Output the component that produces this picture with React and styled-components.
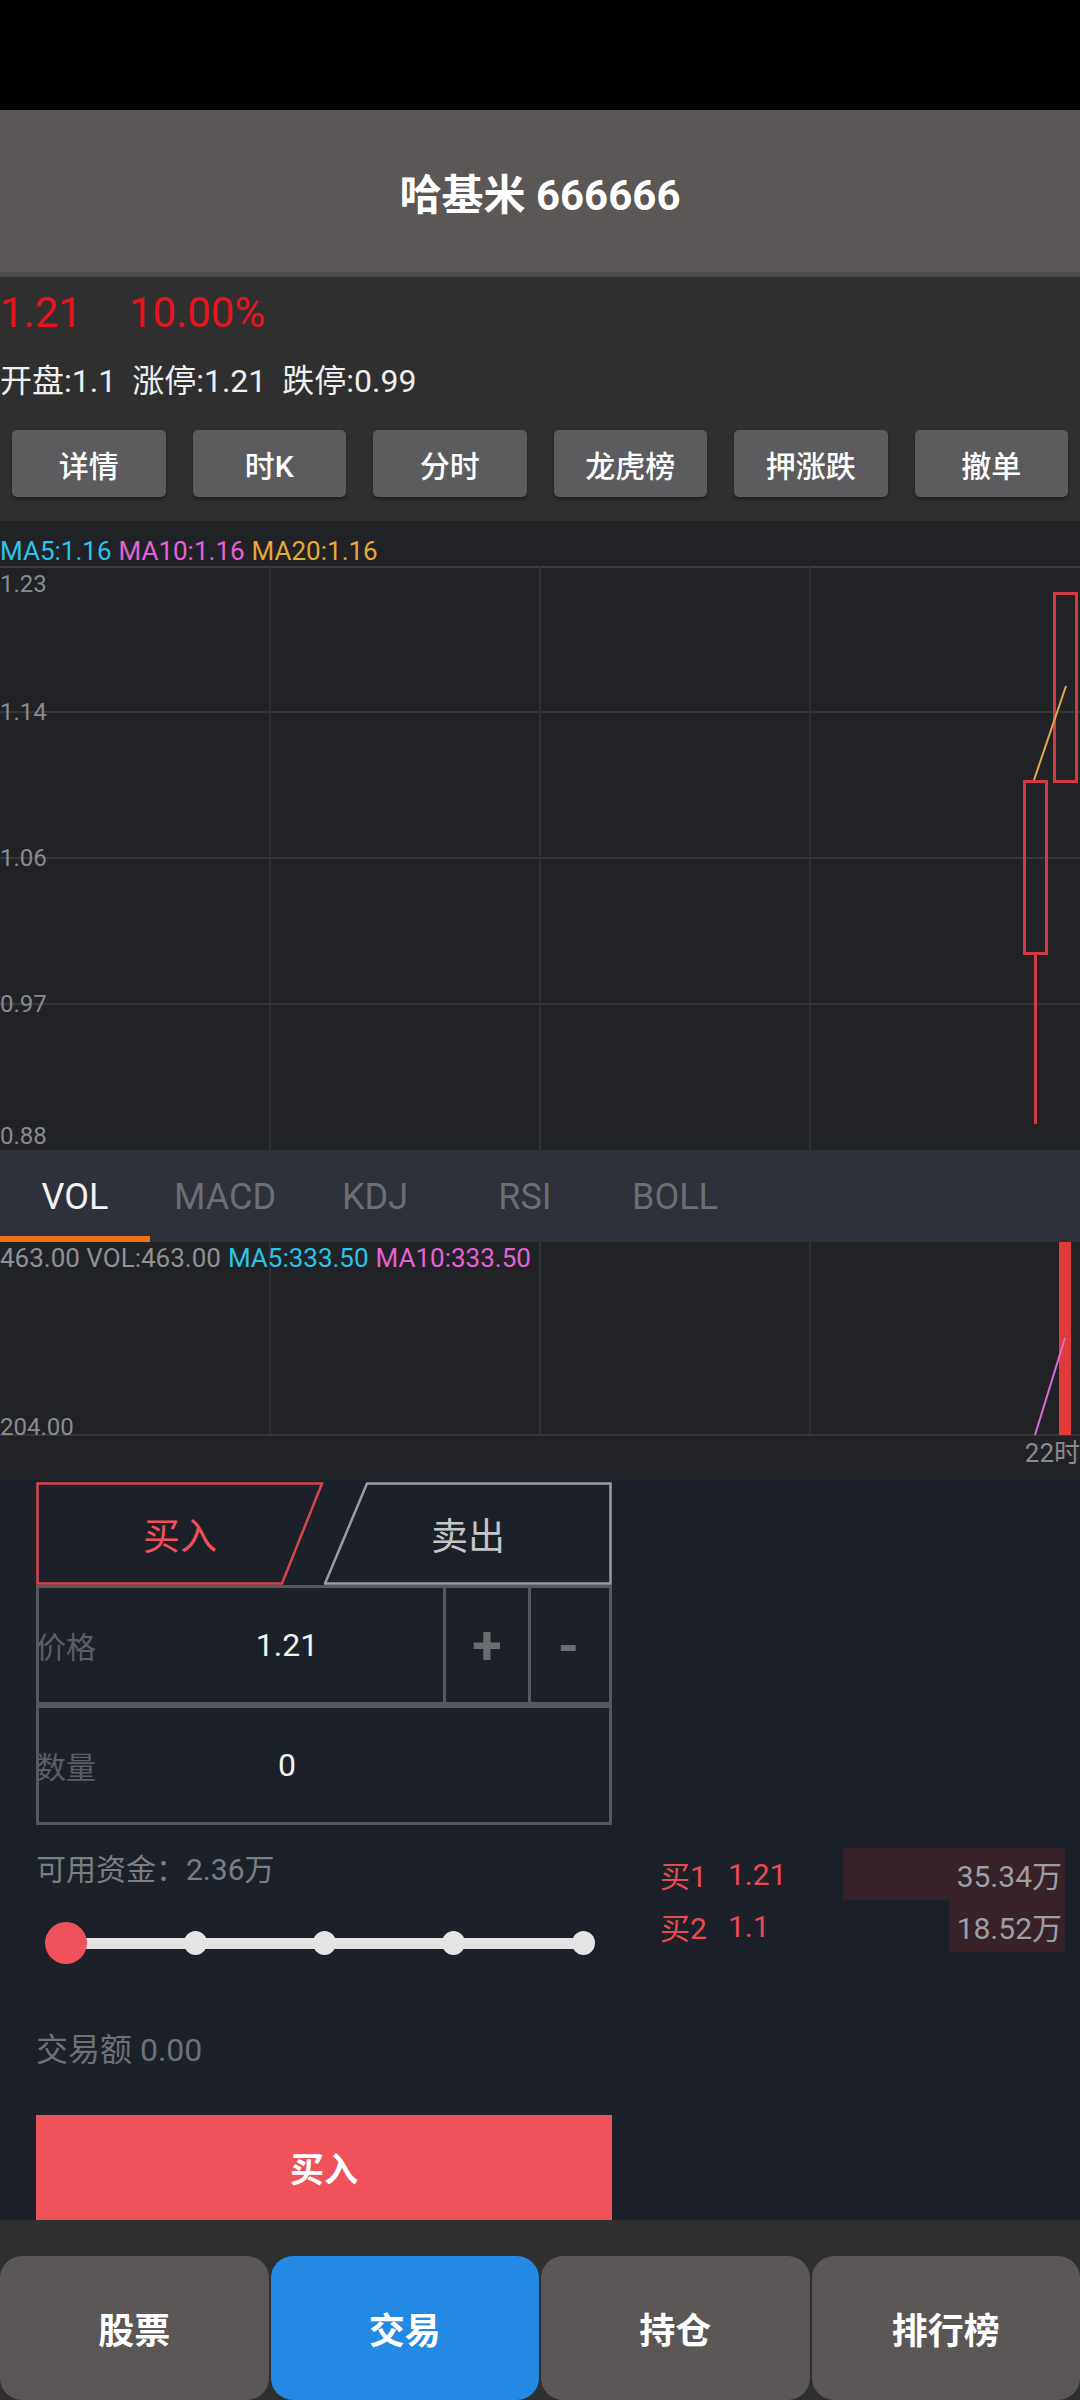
import React from "react"
import styled, { createGlobalStyle } from "styled-components"

const actions = ["详情", "时K", "分时", "龙虎榜", "押涨跌", "撤单"]
const indicators = ["VOL", "MACD", "KDJ", "RSI", "BOLL"]
const priceTicks = [
  { label: "1.23", top: 4 },
  { label: "1.14", top: 132 },
  { label: "1.06", top: 278 },
  { label: "0.97", top: 424 },
  { label: "0.88", top: 556 },
]
const book = [
  { side: "买1", price: "1.21", amount: 35.34 },
  { side: "买2", price: "1.1", amount: 18.52 },
]
const stops = [0, 25, 50, 75, 100]
const navs = ["股票", "交易", "持仓", "排行榜"]

class App extends React.Component {
  render() {
    const maxAmount = Math.max(...book.map(b => b.amount))
    return (
      <Page>
        <GlobalStyle />
        <StatusBar />
        <Header>哈基米 666666</Header>

        <InfoSection>
          <PriceLine>
            <span>1.21</span>
            <span>10.00%</span>
          </PriceLine>
          <StatsLine>
            <Stat>开盘:1.1</Stat>
            <Stat>涨停:1.21</Stat>
            <Stat>跌停:0.99</Stat>
          </StatsLine>
          <ActionRow>
            {actions.map(a => (
              <ActionButton key={a}>{a}</ActionButton>
            ))}
          </ActionRow>
        </InfoSection>

        <ChartSection>
          <Legend>
            <LegendItem $color="#2bc3e8">MA5:1.16</LegendItem>
            <LegendItem $color="#e462d6">MA10:1.16</LegendItem>
            <LegendItem $color="#e6a93a">MA20:1.16</LegendItem>
          </Legend>
          <Plot $height={584}>
            <PlotSvg width="1080" height="584" viewBox="0 0 1080 584">
              <line x1="0" x2="1080" y1="1" y2="1" stroke="#3b3d41" strokeWidth="2" />
              {[146, 292, 438].map(y => (
                <line key={y} x1="0" x2="1080" y1={y} y2={y} stroke="#34363a" strokeWidth="2" />
              ))}
              {[270, 540, 810].map(x => (
                <line key={x} x1={x} x2={x} y1="0" y2="584" stroke="#2f3135" strokeWidth="2" />
              ))}
              <rect x="1054.5" y="27.5" width="22" height="188" fill="none" stroke="#d23a43" strokeWidth="3" />
              <rect x="1024.5" y="215.5" width="22" height="172" fill="none" stroke="#d23a43" strokeWidth="3" />
              <line x1="1035.5" x2="1035.5" y1="388" y2="558" stroke="#d23a43" strokeWidth="3" />
              <line x1="1034" y1="214" x2="1066" y2="120" stroke="#e2a94c" strokeWidth="2" />
            </PlotSvg>
            {priceTicks.map(t => (
              <AxisLabel key={t.label} $top={t.top}>
                {t.label}
              </AxisLabel>
            ))}
          </Plot>

          <IndicatorTabs>
            {indicators.map((name, i) => (
              <IndicatorTab key={name} $active={i === 0}>
                {name}
              </IndicatorTab>
            ))}
          </IndicatorTabs>

          <Plot $height={194}>
            <PlotSvg width="1080" height="194" viewBox="0 0 1080 194">
              {[270, 540, 810].map(x => (
                <line key={x} x1={x} x2={x} y1="0" y2="194" stroke="#2f3135" strokeWidth="2" />
              ))}
              <line x1="0" x2="1080" y1="193" y2="193" stroke="#34363a" strokeWidth="2" />
              <rect x="1059" y="0" width="12" height="193" fill="#e03a3a" />
              <line x1="1035" y1="193" x2="1065" y2="96" stroke="#de6ad8" strokeWidth="2" />
            </PlotSvg>
            <VolLegend>
              <LegendItem $color="#8f9195">463.00 VOL:463.00</LegendItem>
              <LegendItem $color="#2bc3e8">MA5:333.50</LegendItem>
              <LegendItem $color="#e462d6">MA10:333.50</LegendItem>
            </VolLegend>
            <AxisLabel $top={171}>204.00</AxisLabel>
          </Plot>
          <TimeAxis>22时</TimeAxis>
        </ChartSection>

        <TradePanel>
          <OrderForm>
            <SideTabs>
              <SideTab $color="#f0505a">
                <TabOutline viewBox="0 0 288 103" preserveAspectRatio="none">
                  <polygon points="1.5,1.5 286,1.5 246,101.5 1.5,101.5" fill="none" stroke="#d8434c" strokeWidth="2.5" />
                </TabOutline>
                <TabText>买入</TabText>
              </SideTab>
              <SideTab $color="#c4c6ca">
                <TabOutline viewBox="0 0 288 103" preserveAspectRatio="none">
                  <polygon points="43,1.5 286.5,1.5 286.5,101.5 1,101.5" fill="none" stroke="#9a9ea4" strokeWidth="2.5" />
                </TabOutline>
                <TabText>卖出</TabText>
              </SideTab>
            </SideTabs>

            <FieldRow>
              <FieldLabel>价格</FieldLabel>
              <FieldValue>1.21</FieldValue>
              <StepButton $width={85}>+</StepButton>
              <StepButton $width={78}>-</StepButton>
            </FieldRow>
            <FieldRow>
              <FieldLabel>数量</FieldLabel>
              <FieldValue>0</FieldValue>
            </FieldRow>

            <Funds>可用资金：2.36万</Funds>

            <SliderRow>
              <SliderTrack>
                {stops.map((p, i) =>
                  i === 0 ? (
                    <Knob key={p} style={{ left: `${p}%` }} />
                  ) : (
                    <Stop key={p} style={{ left: `${p}%` }} />
                  )
                )}
              </SliderTrack>
            </SliderRow>

            <Amount>交易额 0.00</Amount>

            <BuyButton>买入</BuyButton>
          </OrderForm>

          <OrderBook>
            {book.map(row => (
              <BookRow key={row.side}>
                <BookBar style={{ width: `${(row.amount / maxAmount) * 222}px` }} />
                <BookSide>{row.side}</BookSide>
                <BookPrice>{row.price}</BookPrice>
                <BookAmount>{row.amount.toFixed(2)}万</BookAmount>
              </BookRow>
            ))}
          </OrderBook>
        </TradePanel>

        <BottomNav>
          {navs.map((n, i) => (
            <NavTab key={n} $active={i === 1}>
              {n}
            </NavTab>
          ))}
        </BottomNav>
      </Page>
    )
  }
}

export default App

// STYLED CSS
const GlobalStyle = createGlobalStyle`
  html, body {
    margin: 0;
    padding: 0;
    background: #000;
  }
  body {
    font-family: Roboto, "Noto Sans CJK SC", sans-serif;
  }
  * {
    box-sizing: border-box;
  }
`

const Page = styled.div`
  width: 1080px;
  height: 2400px;
  overflow: hidden;
  display: flex;
  flex-direction: column;
  background: #1c2029;
`

const StatusBar = styled.div`
  height: 110px;
  background: #000;
`

const Header = styled.div`
  height: 167px;
  background: #5a5756;
  border-bottom: 5px solid #4b4949;
  display: flex;
  align-items: center;
  justify-content: center;
  color: #fff;
  font-size: 42px;
  font-weight: 700;
`

//TOP INFO
const InfoSection = styled.div`
  background: #2f2f2f;
  padding-bottom: 24px;
`

const PriceLine = styled.div`
  height: 70px;
  display: flex;
  align-items: center;
  gap: 47px;
  color: #e5141c;
  font-size: 42px;
`

const StatsLine = styled.div`
  height: 62px;
  display: flex;
  align-items: center;
  color: #efefef;
  font-size: 32px;
`

const Stat = styled.span`
  margin-right: 16px;
`

const ActionRow = styled.div`
  margin-top: 21px;
  display: flex;
  gap: 27px;
  padding: 0 12px;
`

const ActionButton = styled.button`
  flex: 1;
  height: 67px;
  border: none;
  border-radius: 5px;
  background: #5c5c5e;
  color: #fff;
  font-family: inherit;
  font-size: 30px;
  font-weight: 500;
  box-shadow: 0 2px 3px rgba(0, 0, 0, 0.35);
  padding: 0;
`

//CHART
const ChartSection = styled.div`
  background: #202226;
`

const Legend = styled.div`
  height: 45px;
  display: flex;
  align-items: flex-end;
  font-size: 26px;
  line-height: 30px;
  white-space: nowrap;
`

const LegendItem = styled.span`
  color: ${p => p.$color};
  margin-right: 7px;
`

const Plot = styled.div`
  position: relative;
  height: ${p => p.$height}px;
`

const PlotSvg = styled.svg`
  position: absolute;
  top: 0;
  left: 0;
  display: block;
`

const AxisLabel = styled.span`
  position: absolute;
  left: 0;
  top: ${p => p.$top}px;
  font-size: 24px;
  line-height: 28px;
  color: #8b8b8d;
`

const IndicatorTabs = styled.div`
  height: 92px;
  display: flex;
  background: #2e3139;
`

const IndicatorTab = styled.div`
  position: relative;
  width: 150px;
  text-align: center;
  line-height: 94px;
  font-size: 36px;
  color: ${p => (p.$active ? "#f2f2f2" : "#6b6e74")};

  &::after {
    content: "";
    display: ${p => (p.$active ? "block" : "none")};
    position: absolute;
    left: 0;
    right: 0;
    bottom: 0;
    height: 6px;
    background: #f07116;
  }
`

const VolLegend = styled.div`
  position: absolute;
  top: 2px;
  left: 0;
  display: flex;
  font-size: 26px;
  line-height: 28px;
  white-space: nowrap;
`

const TimeAxis = styled.div`
  height: 42px;
  text-align: right;
  font-size: 26px;
  line-height: 34px;
  color: #8b8b8d;
  white-space: nowrap;
`

//TRADE PANEL
const TradePanel = styled.div`
  height: 742px;
  background: #1c2029;
  display: flex;
  padding-top: 4px;
`

const OrderForm = styled.div`
  margin-left: 36px;
  width: 576px;
  display: flex;
  flex-direction: column;
`

const SideTabs = styled.div`
  height: 103px;
  display: flex;
`

const SideTab = styled.div`
  position: relative;
  flex: 1;
  display: flex;
  align-items: center;
  justify-content: center;
  color: ${p => p.$color};
  font-size: 37px;
`

const TabOutline = styled.svg`
  position: absolute;
  inset: 0;
  width: 100%;
  height: 100%;
`

const TabText = styled.span`
  position: relative;
`

const FieldRow = styled.div`
  height: 120px;
  display: flex;
  border: 3px solid #55575b;
`

const FieldLabel = styled.div`
  width: 95px;
  margin-left: -3px;
  display: flex;
  align-items: center;
  font-size: 30px;
  color: #5b5e64;
`

const FieldValue = styled.div`
  width: 312px;
  display: flex;
  align-items: center;
  justify-content: center;
  font-size: 32px;
  color: #f2f2f2;
`

const StepButton = styled.div`
  width: ${p => p.$width}px;
  border-left: 3px solid #55575b;
  display: flex;
  align-items: center;
  justify-content: center;
  font-size: 54px;
  font-weight: 700;
  color: #6b6c6e;
`

const Funds = styled.div`
  margin-top: 25px;
  line-height: 40px;
  font-size: 30px;
  color: #7b7e85;
`

const SliderRow = styled.div`
  margin-top: 31px;
  height: 44px;
  display: flex;
  align-items: center;
  padding-left: 30px;
`

const SliderTrack = styled.div`
  position: relative;
  width: 517px;
  height: 11px;
  background: #e4e4e4;
`

const Stop = styled.span`
  position: absolute;
  top: 50%;
  width: 23px;
  height: 24px;
  margin: -12px 0 0 -11.5px;
  border-radius: 50%;
  background: #e4e4e4;
`

const Knob = styled.span`
  position: absolute;
  top: 50%;
  width: 42px;
  height: 42px;
  margin: -21px 0 0 -21px;
  border-radius: 50%;
  background: #f0525a;
`

const Amount = styled.div`
  margin-top: 65px;
  line-height: 40px;
  font-size: 32px;
  color: #6e7178;
`

const BuyButton = styled.div`
  margin-top: 45px;
  height: 105px;
  background: #f0525a;
  display: flex;
  align-items: center;
  justify-content: center;
  color: #fff;
  font-size: 34px;
  font-weight: 700;
`

const OrderBook = styled.div`
  margin-left: 48px;
  width: 405px;
  padding-top: 366px;
`

const BookRow = styled.div`
  position: relative;
  height: 52px;
  display: flex;
  align-items: center;
  font-size: 30px;
`

const BookBar = styled.span`
  position: absolute;
  top: 0;
  right: 0;
  bottom: 0;
  background: #38222a;
`

const BookSide = styled.span`
  position: relative;
  width: 68px;
  color: #e94b55;
`

const BookPrice = styled.span`
  position: relative;
  color: #e94b55;
`

const BookAmount = styled.span`
  position: relative;
  margin-left: auto;
  padding-right: 3px;
  color: #9c9fa5;
`

//BOTTOM NAV
const BottomNav = styled.div`
  height: 180px;
  background: #2f2f2f;
  padding-top: 36px;
  display: flex;
  gap: 2px;
`

const NavTab = styled.div`
  flex: 1;
  height: 144px;
  border-radius: 22px;
  background: ${p => (p.$active ? "#2389e3" : "#5a5756")};
  display: flex;
  align-items: center;
  justify-content: center;
  color: #fff;
  font-size: 36px;
  font-weight: 700;
`
